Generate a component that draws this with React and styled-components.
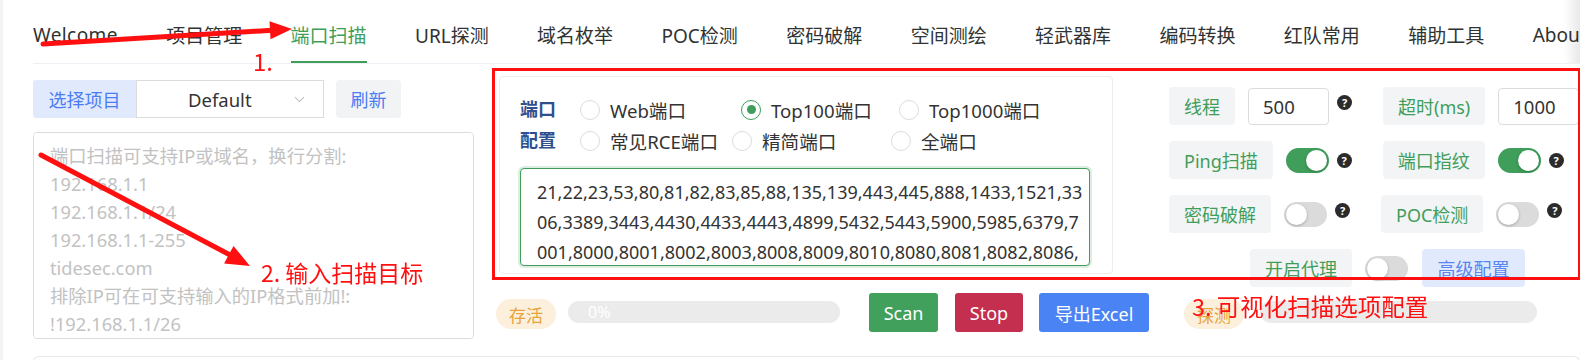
import React from 'react';
import styled, { createGlobalStyle } from 'styled-components';
import { ChevronDown } from 'lucide-react';

const GREEN = '#3f9e5a';
const BLUE = '#4b7cf3';
const RED = '#ff1010';

const GlobalStyle = createGlobalStyle`
  html, body { margin: 0; padding: 0; background: #fff; }
  body {
    font-family: "Noto Sans", "Noto Sans CJK SC", sans-serif;
    color: #333;
    overflow: hidden;
  }
  * { box-sizing: border-box; }
`;

const Page = styled.div`
  position: relative;
  width: 1580px;
  height: 360px;
  overflow: hidden;
  border-left: 3px solid #f3f3f6;
`;

const Nav = styled.nav`
  display: flex;
  gap: 48.4px;
  margin-left: 30px;
  height: 64px;
  border-bottom: 1px solid #efeff5;
  overflow: hidden;
`;

const Tab = styled.div`
  height: 63px;
  padding-top: 8px;
  display: flex;
  align-items: center;
  font-size: 19px;
  white-space: nowrap;
  letter-spacing: ${({ $latin }) => ($latin ? '0.4px' : '0')};
  color: ${({ $active }) => ($active ? GREEN : '#2f3332')};
  border-bottom: 2px solid ${({ $active }) => ($active ? GREEN : 'transparent')};
`;

const NavFade = styled.div`
  position: absolute;
  right: 0;
  top: 0;
  width: 16px;
  height: 63px;
  background: linear-gradient(to right, rgba(0, 0, 0, 0), rgba(0, 0, 0, 0.09));
`;

const Main = styled.div`
  display: flex;
  align-items: flex-start;
`;

const LeftPanel = styled.div`
  margin-left: 30px;
  width: 441px;
  padding-top: 16px;
`;

const ProjectRow = styled.div`
  display: flex;
  height: 38px;
`;

const ProjectTag = styled.div`
  width: 103px;
  display: flex;
  align-items: center;
  justify-content: center;
  background: #e1eafd;
  color: ${BLUE};
  font-size: 18px;
  border-radius: 3px 0 0 3px;
`;

const Select = styled.div`
  width: 188px;
  display: flex;
  align-items: center;
  justify-content: space-between;
  padding: 0 15px 0 51px;
  border: 1px solid #dcdcdc;
  font-size: 18.5px;
  color: #333;
`;

const RefreshBtn = styled.div`
  margin-left: 12px;
  width: 65px;
  display: flex;
  align-items: center;
  justify-content: center;
  background: #f2f3f5;
  color: ${BLUE};
  font-size: 18px;
  border-radius: 4px;
`;

const TargetArea = styled.textarea`
  display: block;
  margin-top: 14px;
  width: 441px;
  height: 207px;
  padding: 9px 16px;
  border: 1px solid #dcdcdc;
  border-radius: 4px;
  font-family: inherit;
  font-size: 18.3px;
  line-height: 28px;
  resize: none;
  outline: none;
  &::placeholder { color: #c2c2c2; }
`;

const RightArea = styled.div`
  margin-left: 25px;
  padding-top: 12px;
  display: flex;
  flex-direction: column;
`;

const TopRow = styled.div`
  display: flex;
  align-items: flex-start;
`;

const PortCard = styled.div`
  width: 614px;
  height: 198px;
  border: 1px solid #ececf1;
  border-radius: 4px;
  padding: 17px 23px 10px 20px;
`;

const PortHead = styled.div`
  display: flex;
`;

const PortTitle = styled.div`
  width: 36px;
  color: #2f4f8f;
  font-weight: 700;
  font-size: 18px;
  line-height: 31px;
`;

const RadioRows = styled.div`
  margin-left: 24px;
  display: flex;
  flex-direction: column;
`;

const RadioRow = styled.div`
  display: flex;
  align-items: center;
  height: 31px;
`;

const RadioItem = styled.label`
  width: ${({ $w }) => ($w ? `${$w}px` : 'auto')};
  display: flex;
  align-items: center;
  gap: 10px;
  font-size: 18.6px;
  white-space: nowrap;
`;

const RadioDot = styled.span`
  width: 20px;
  height: 20px;
  border-radius: 50%;
  border: 1px solid ${({ $on }) => ($on ? GREEN : '#dcdce0')};
  display: flex;
  align-items: center;
  justify-content: center;
  &::after {
    content: '';
    width: 9px;
    height: 9px;
    border-radius: 50%;
    background: ${({ $on }) => ($on ? GREEN : 'transparent')};
  }
`;

const PortText = styled.textarea`
  display: block;
  margin-top: 12px;
  width: 570px;
  height: 98px;
  padding: 8px 16px;
  border: 1px solid ${GREEN};
  border-radius: 4px;
  box-shadow: 0 0 0 2px rgba(63, 158, 90, 0.18);
  font-family: inherit;
  font-size: 18px;
  line-height: 30px;
  color: #333;
  white-space: pre;
  overflow: hidden;
  resize: none;
  outline: none;
`;

const Controls = styled.div`
  margin-left: 56px;
  padding-top: 11px;
  display: flex;
  flex-direction: column;
  gap: 16px;
`;

const CtrlRow = styled.div`
  display: flex;
  align-items: center;
  height: 38px;
  margin-left: ${({ $indent }) => $indent || 0}px;
`;

const Field = styled.div`
  display: flex;
  align-items: center;
  height: 38px;
  & + & { margin-left: 31px; }
`;

const FieldLabel = styled.div`
  height: 38px;
  padding: 0 15px;
  display: flex;
  align-items: center;
  background: #f3f4f5;
  border-radius: 4px;
  color: ${GREEN};
  font-size: 18px;
  white-space: nowrap;
  margin-right: 13px;
`;

const NumInput = styled.input`
  width: 81px;
  height: 37px;
  padding-left: 14px;
  border: 1px solid #dcdcdc;
  border-radius: 4px;
  font-family: inherit;
  font-size: 18.5px;
  color: #333;
  outline: none;
`;

const Help = styled.span`
  width: 15px;
  height: 15px;
  margin-left: 8px;
  border-radius: 50%;
  background: #2b2b2b;
  color: #fff;
  font-size: 11px;
  font-weight: 700;
  display: flex;
  align-items: center;
  justify-content: center;
  align-self: ${({ $raised }) => ($raised ? 'flex-start' : 'center')};
  margin-top: ${({ $raised }) => ($raised ? '8px' : '0')};
`;

const Toggle = styled.span`
  width: 43px;
  height: 25px;
  padding: 2px;
  border-radius: 13px;
  display: flex;
  justify-content: ${({ $on }) => ($on ? 'flex-end' : 'flex-start')};
  background: ${({ $on }) => ($on ? GREEN : '#dbdbdb')};
  &::after {
    content: '';
    width: 21px;
    height: 21px;
    border-radius: 50%;
    background: #fff;
    box-shadow: 0 1px 3px rgba(0, 0, 0, 0.25);
  }
`;

const AdvancedBtn = styled.div`
  margin-left: 14px;
  width: 103px;
  height: 38px;
  display: flex;
  align-items: center;
  justify-content: center;
  background: #e1eafd;
  color: #5a85f0;
  font-size: 18px;
  border-radius: 4px;
`;

const BottomRow = styled.div`
  margin-top: 6px;
  margin-left: -3px;
  height: 39px;
  display: flex;
  align-items: center;
`;

const Pill = styled.span`
  height: 30px;
  margin-left: ${({ $gap }) => $gap || 0}px;
  margin-top: 3px;
  padding: 0 13px;
  border-radius: 15px;
  display: flex;
  align-items: center;
  background: #fcf0dc;
  color: #e6a23c;
  font-size: 17px;
`;

const Bar = styled.div`
  margin-left: ${({ $gap }) => $gap}px;
  width: ${({ $w }) => $w}px;
  height: 22px;
  margin-top: -2px;
  border-radius: 11px;
  background: #ebebeb;
  color: #fff;
  font-size: 16px;
  padding-left: 20px;
  display: flex;
  align-items: center;
`;

const ActionBtn = styled.div`
  margin-left: ${({ $gap }) => $gap}px;
  width: ${({ $w }) => $w}px;
  height: 39px;
  border-radius: 3px;
  background: ${({ $bg }) => $bg};
  color: #fff;
  font-size: 18px;
  display: flex;
  align-items: center;
  justify-content: center;
`;

const BottomCard = styled.div`
  margin: 17px 0 0 30px;
  height: 30px;
  border: 1px solid #e8e8ee;
  border-bottom: none;
  border-radius: 6px 6px 0 0;
`;

const AnnoBox = styled.div`
  position: absolute;
  left: 489px;
  top: 68px;
  width: 1089px;
  height: 212px;
  border: 3px solid ${RED};
  pointer-events: none;
`;

const AnnoText = styled.span`
  position: absolute;
  left: ${({ $x }) => $x}px;
  top: ${({ $y }) => $y}px;
  color: ${RED};
  font-family: "Noto Sans CJK SC", sans-serif;
  font-size: ${({ $size }) => $size || 24}px;
  line-height: 30px;
  white-space: nowrap;
  pointer-events: none;
`;

const Arrows = styled.svg`
  position: absolute;
  left: 0;
  top: 0;
  pointer-events: none;
`;

const tabs = ['Welcome', '项目管理', '端口扫描', 'URL探测', '域名枚举', 'POC检测', '密码破解', '空间测绘', '轻武器库', '编码转换', '红队常用', '辅助工具', 'About'];

const radioRows = [
  [{ t: 'Web端口', w: 161 }, { t: 'Top100端口', w: 158, on: true }, { t: 'Top1000端口' }],
  [{ t: '常见RCE端口', w: 152 }, { t: '精简端口', w: 159 }, { t: '全端口' }],
];

const ports = [
  '21,22,23,53,80,81,82,83,85,88,135,139,443,445,888,1433,1521,33',
  '06,3389,3443,4430,4433,4443,4899,5432,5443,5900,5985,6379,7',
  '001,8000,8001,8002,8003,8008,8009,8010,8080,8081,8082,8086,',
].join('\n');

const placeholder = [
  '端口扫描可支持IP或域名，换行分割:',
  '192.168.1.1',
  '192.168.1.1/24',
  '192.168.1.1-255',
  'tidesec.com',
  '排除IP可在可支持输入的IP格式前加!:',
  '!192.168.1.1/26',
].join('\n');

const App = () => (
  <Page>
    <GlobalStyle />
    <Nav>
      {tabs.map((t) => (
        <Tab key={t} $active={t === '端口扫描'} $latin={t === 'Welcome'}>{t}</Tab>
      ))}
    </Nav>
    <NavFade />

    <Main>
      <LeftPanel>
        <ProjectRow>
          <ProjectTag>选择项目</ProjectTag>
          <Select>
            Default
            <ChevronDown size={17} color="#c2c2c2" strokeWidth={1.5} />
          </Select>
          <RefreshBtn>刷新</RefreshBtn>
        </ProjectRow>
        <TargetArea placeholder={placeholder} readOnly />
      </LeftPanel>

      <RightArea>
        <TopRow>
          <PortCard>
            <PortHead>
              <PortTitle>端口<br />配置</PortTitle>
              <RadioRows>
                {radioRows.map((row, i) => (
                  <RadioRow key={i}>
                    {row.map((r) => (
                      <RadioItem key={r.t} $w={r.w}>
                        <RadioDot $on={r.on} />
                        {r.t}
                      </RadioItem>
                    ))}
                  </RadioRow>
                ))}
              </RadioRows>
            </PortHead>
            <PortText value={ports} readOnly />
          </PortCard>

          <Controls>
            <CtrlRow>
              <Field>
                <FieldLabel>线程</FieldLabel>
                <NumInput defaultValue="500" />
                <Help $raised>?</Help>
              </Field>
              <Field>
                <FieldLabel>超时(ms)</FieldLabel>
                <NumInput defaultValue="1000" />
              </Field>
            </CtrlRow>
            <CtrlRow>
              <Field>
                <FieldLabel>Ping扫描</FieldLabel>
                <Toggle $on />
                <Help>?</Help>
              </Field>
              <Field>
                <FieldLabel>端口指纹</FieldLabel>
                <Toggle $on />
                <Help>?</Help>
              </Field>
            </CtrlRow>
            <CtrlRow>
              <Field>
                <FieldLabel>密码破解</FieldLabel>
                <Toggle />
                <Help $raised>?</Help>
              </Field>
              <Field>
                <FieldLabel>POC检测</FieldLabel>
                <Toggle />
                <Help $raised>?</Help>
              </Field>
            </CtrlRow>
            <CtrlRow $indent={81}>
              <Field>
                <FieldLabel>开启代理</FieldLabel>
                <Toggle />
              </Field>
              <AdvancedBtn>高级配置</AdvancedBtn>
            </CtrlRow>
          </Controls>
        </TopRow>

        <BottomRow>
          <Pill>存活</Pill>
          <Bar $gap={12} $w={272}>0%</Bar>
          <ActionBtn $gap={29} $w={69} $bg="#40a05c">Scan</ActionBtn>
          <ActionBtn $gap={17} $w={68} $bg="#c42f4f">Stop</ActionBtn>
          <ActionBtn $gap={16} $w={110} $bg="#4a84f4">导出Excel</ActionBtn>
          <Pill $gap={35}>探测</Pill>
          <Bar $gap={16} $w={277} />
        </BottomRow>
      </RightArea>
    </Main>

    <BottomCard />

    <AnnoBox />
    <Arrows width="1580" height="360" viewBox="0 0 1580 360">
      <line x1="40" y1="44" x2="269" y2="30.3" stroke={RED} strokeWidth="5" strokeLinecap="round" />
      <polygon points="289,29 267.5,39.3 266.5,21.3" fill={RED} />
      <line x1="38" y1="155" x2="228" y2="255.5" stroke={RED} strokeWidth="5" strokeLinecap="round" />
      <polygon points="247,266 221.1,263.5 230.5,245.9" fill={RED} />
    </Arrows>
    <AnnoText $x={250} $y={46}>1.</AnnoText>
    <AnnoText $x={258} $y={257} $size={23}>2. 输入扫描目标</AnnoText>
    <AnnoText $x={1189} $y={291} $size={23.5}>3. 可视化扫描选项配置</AnnoText>
  </Page>
);

export default App;
